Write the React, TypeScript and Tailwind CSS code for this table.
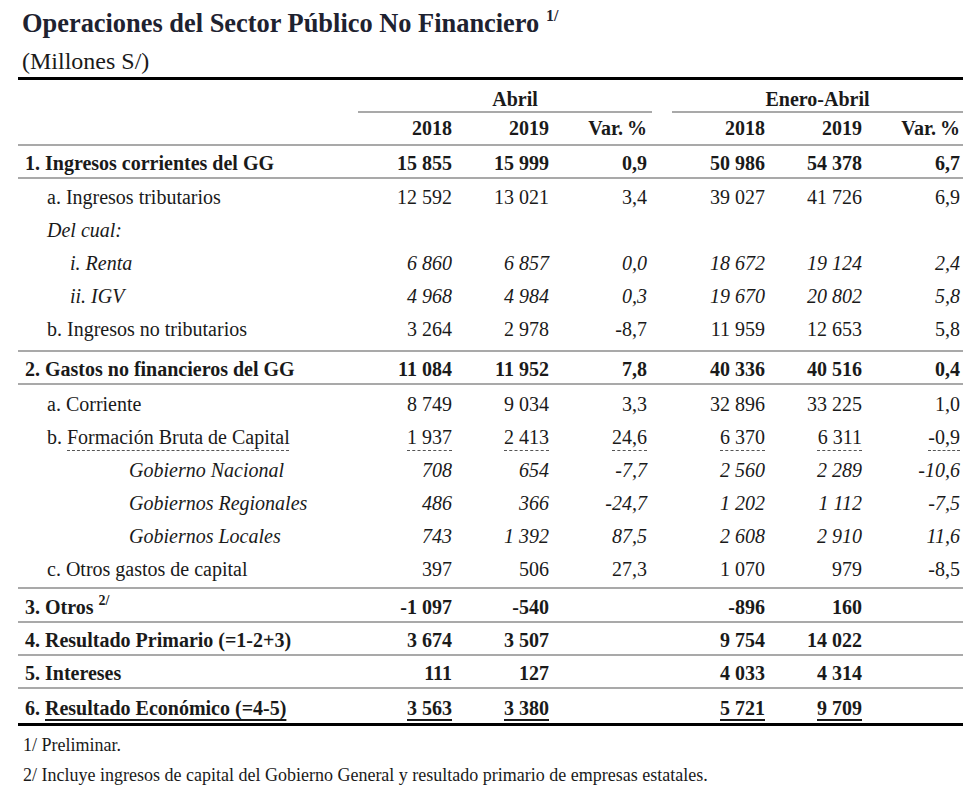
import React from "react";

type Row = {
  label: React.ReactNode;
  vals: string[];
  kind: "bold" | "reg" | "ital";
  indent: string;
  dashed?: boolean;
  under?: boolean;
};

const GRID = "grid grid-cols-[340px_96px_97px_101px_20px_95px_97px_99px]";
const PR = ["pr-[2px]", "pr-[2px]", "pr-[5px]", "pr-[2px]", "pr-[2px]", "pr-[3px]"];
const LINE = "border-b-2 border-[#a9a9a9]";

function Cells({ vals, dashed, under }: { vals: string[]; dashed?: boolean; under?: boolean }) {
  const out: React.ReactNode[] = [];
  vals.forEach((v, i) => {
    if (i === 3) out.push(<div key="gap" />);
    out.push(
      <div key={i} className={`text-right whitespace-nowrap ${PR[i]}`}>
        {v === "" ? null : dashed ? (
          <span className="underline decoration-dashed decoration-[#555] decoration-1 underline-offset-[6px]">{v}</span>
        ) : under ? (
          <span className="underline decoration-[1.5px] underline-offset-[4px]">{v}</span>
        ) : (
          v
        )}
      </div>
    );
  });
  return <>{out}</>;
}

function DataRow({ r, cls }: { r: Row; cls: string }) {
  const font = r.kind === "bold" ? "font-bold" : r.kind === "ital" ? "italic" : "";
  return (
    <div className={`${GRID} ${font} ${cls}`}>
      <div className={`${r.indent} whitespace-nowrap`}>{r.label}</div>
      <Cells vals={r.vals} dashed={r.dashed} under={r.under} />
    </div>
  );
}

export default function App() {
  const group1: Row[] = [
    { label: "a. Ingresos tributarios", vals: ["12 592", "13 021", "3,4", "39 027", "41 726", "6,9"], kind: "reg", indent: "pl-[29px]" },
    { label: "Del cual:", vals: ["", "", "", "", "", ""], kind: "ital", indent: "pl-[29px]" },
    { label: "i. Renta", vals: ["6 860", "6 857", "0,0", "18 672", "19 124", "2,4"], kind: "ital", indent: "pl-[52px]" },
    { label: "ii. IGV", vals: ["4 968", "4 984", "0,3", "19 670", "20 802", "5,8"], kind: "ital", indent: "pl-[52px]" },
    { label: "b. Ingresos no tributarios", vals: ["3 264", "2 978", "-8,7", "11 959", "12 653", "5,8"], kind: "reg", indent: "pl-[29px]" },
  ];
  const group2: Row[] = [
    { label: "a. Corriente", vals: ["8 749", "9 034", "3,3", "32 896", "33 225", "1,0"], kind: "reg", indent: "pl-[29px]" },
    {
      label: (
        <>
          b.{" "}
          <span className="underline decoration-dashed decoration-[#555] decoration-1 underline-offset-[6px]">
            Formación Bruta de Capital
          </span>
        </>
      ),
      vals: ["1 937", "2 413", "24,6", "6 370", "6 311", "-0,9"],
      kind: "reg",
      indent: "pl-[29px]",
      dashed: true,
    },
    { label: "Gobierno Nacional", vals: ["708", "654", "-7,7", "2 560", "2 289", "-10,6"], kind: "ital", indent: "pl-[111px]" },
    { label: "Gobiernos Regionales", vals: ["486", "366", "-24,7", "1 202", "1 112", "-7,5"], kind: "ital", indent: "pl-[111px]" },
    { label: "Gobiernos Locales", vals: ["743", "1 392", "87,5", "2 608", "2 910", "11,6"], kind: "ital", indent: "pl-[111px]" },
    { label: "c. Otros gastos de capital", vals: ["397", "506", "27,3", "1 070", "979", "-8,5"], kind: "reg", indent: "pl-[29px]" },
  ];

  return (
    <div
      className="w-[980px] h-[797px] bg-white text-[#1a1a1a] overflow-hidden"
      style={{ fontFamily: '"Liberation Serif", "Times New Roman", serif' }}
    >
      <div className="pl-[22px] pt-[6px] h-[40px] leading-[34px] text-[26.4px] font-bold text-[#1e2230] whitespace-nowrap">
        Operaciones del Sector Público No Financiero{" "}
        <span className="inline-block align-top text-[16px] font-bold leading-[16px] mt-[2px]">1/</span>
      </div>
      <div className="pl-[22px] pt-[6px] h-[37px] leading-[31px] text-[24px]">(Millones S/)</div>

      <div className="ml-[18px] w-[945px] text-[20px]">
        <div className="h-[3px] bg-black" />

        {/* header Abril / Enero-Abril */}
        <div className={`${GRID} font-bold h-[33px]`}>
          <div />
          <div className={`col-span-3 ${LINE} pt-[8px] leading-[23px] text-center pl-[20px]`}>Abril</div>
          <div />
          <div className={`col-span-3 ${LINE} pt-[8px] leading-[23px] text-center`}>Enero-Abril</div>
        </div>
        {/* years */}
        <div className={`${GRID} font-bold h-[33px] leading-[31px] ${LINE}`}>
          <div />
          <Cells vals={["2018", "2019", "Var.\u2009%", "2018", "2019", "Var.\u2009%"]} />
        </div>

        <DataRow
          r={{ label: "1. Ingresos corrientes del GG", vals: ["15 855", "15 999", "0,9", "50 986", "54 378", "6,7"], kind: "bold", indent: "pl-[7px]" }}
          cls={`h-[33px] pt-[4px] leading-[27px] ${LINE}`}
        />

        <div className={`pt-[2px] pb-[4px] ${LINE}`}>
          {group1.map((r, i) => (
            <DataRow key={i} r={r} cls="h-[33px] leading-[33px]" />
          ))}
        </div>

        <DataRow
          r={{ label: "2. Gastos no financieros del GG", vals: ["11 084", "11 952", "7,8", "40 336", "40 516", "0,4"], kind: "bold", indent: "pl-[7px]" }}
          cls={`h-[33px] pt-[4px] leading-[27px] ${LINE}`}
        />

        <div className={`pt-[3px] pb-[1px] ${LINE}`}>
          {group2.map((r, i) => (
            <DataRow key={i} r={r} cls="h-[33px] leading-[33px]" />
          ))}
        </div>

        <DataRow
          r={{
            label: (
              <>
                3. Otros{" "}
                <span className="inline-block align-top text-[14px] leading-[14px] mt-[1px]">2/</span>
              </>
            ),
            vals: ["-1 097", "-540", "", "-896", "160", ""],
            kind: "bold",
            indent: "pl-[7px]",
          }}
          cls={`h-[34px] pt-[4px] leading-[28px] ${LINE}`}
        />
        <DataRow
          r={{ label: "4. Resultado Primario (=1-2+3)", vals: ["3 674", "3 507", "", "9 754", "14 022", ""], kind: "bold", indent: "pl-[7px]" }}
          cls={`h-[33px] pt-[4px] leading-[27px] ${LINE}`}
        />
        <DataRow
          r={{ label: "5. Intereses", vals: ["111", "127", "", "4 033", "4 314", ""], kind: "bold", indent: "pl-[7px]" }}
          cls={`h-[33px] pt-[4px] leading-[27px] ${LINE}`}
        />
        <DataRow
          r={{
            label: (
              <>
                6. <span className="underline decoration-[1.5px] underline-offset-[4px]">Resultado Económico (=4-5)</span>
              </>
            ),
            vals: ["3 563", "3 380", "", "5 721", "9 709", ""],
            kind: "bold",
            indent: "pl-[7px]",
            under: true,
          }}
          cls="h-[34px] pt-[4px] leading-[30px]"
        />
        <div className="h-[3px] bg-black" />
      </div>

      <div className="pl-[23px] pt-[4px] text-[18px] leading-[30px]">
        <div>1/ Preliminar.</div>
        <div>2/ Incluye ingresos de capital del Gobierno General y resultado primario de empresas estatales.</div>
      </div>
    </div>
  );
}
